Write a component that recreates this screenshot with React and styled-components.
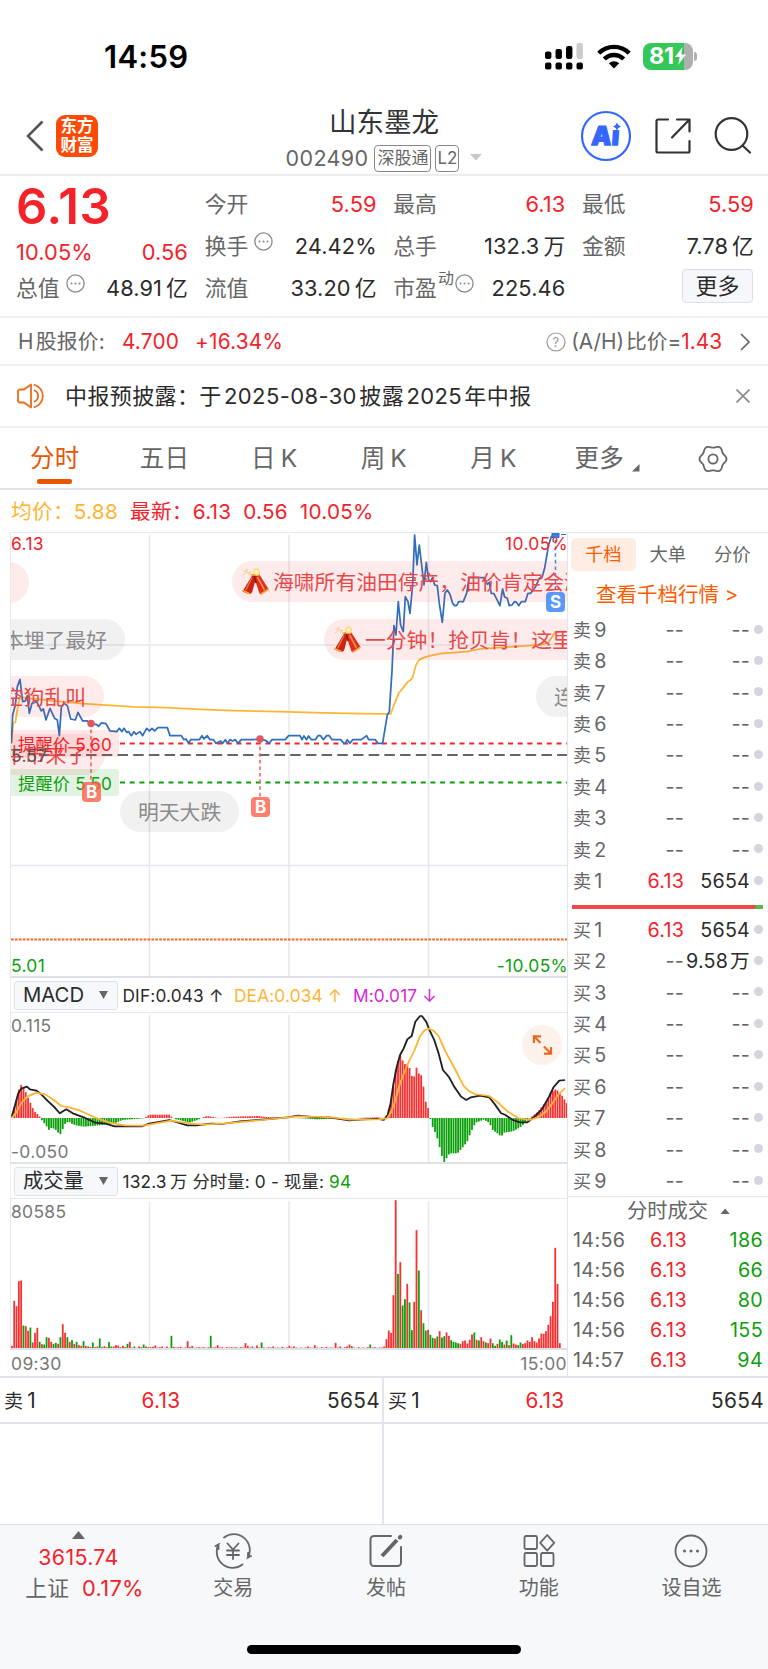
import React from "react";
// Styles
import styled, { createGlobalStyle } from "styled-components";

const RED = "#f5222a";
const GREEN = "#0d9f0d";
const GRAY = "#666";
const DARK = "#2b2b2b";
const ORANGE = "#ff5c00";
const AMBER = "#ffb534";
const LINE = "#e3e5ec";

// ---------- Data ----------

const quoteColumns = [
  [
    { label: "今开", value: "5.59", color: RED },
    { label: "换手", value: "24.42%", info: true },
    { label: "流值", value: "33.20亿" },
  ],
  [
    { label: "最高", value: "6.13", color: RED },
    { label: "总手", value: "132.3万" },
    { label: "市盈", sup: "动", value: "225.46", info: true },
  ],
  [
    { label: "最低", value: "5.59", color: RED },
    { label: "金额", value: "7.78亿" },
  ],
];

const periods = ["分时", "五日", "日K", "周K", "月K"];

const sells = [9, 8, 7, 6, 5, 4, 3, 2, 1].map((n) => ({
  side: "卖",
  n,
  price: n === 1 ? "6.13" : "--",
  volume: n === 1 ? "5654" : "--",
}));

const buys = [1, 2, 3, 4, 5, 6, 7, 8, 9].map((n) => ({
  side: "买",
  n,
  price: n === 1 ? "6.13" : "--",
  volume: n === 1 ? "5654" : n === 2 ? "9.58万" : "--",
}));

const ticks = [
  ["14:56", "6.13", 186],
  ["14:56", "6.13", 66],
  ["14:56", "6.13", 80],
  ["14:56", "6.13", 155],
  ["14:57", "6.13", 94],
];

// Thin space between a number and its Chinese unit
const withUnit = (text) => text.replace(/([万亿])/, "\u2009$1");

// Price line, in thirds of a pixel from the chart's left and top edges
const priceLine =
  "1,634 5,549 13,519 19,464 27,442 35,509 43,507 49,491 55,544 63,514 77,509 91,537 97,531 105,564 117,529 131,559 139,564 145,611 151,527 159,514 169,521 179,561 193,564 201,541 215,567 229,567 241,577 255,577 263,583 271,573 285,575 297,597 317,599 325,589 333,599 339,589 347,601 353,599 361,611 369,599 375,607 387,599 395,611 407,589 415,597 423,589 431,597 441,587 469,587 477,611 511,611 519,623 525,621 533,634 539,623 565,623 573,611 579,621 589,611 597,623 607,623 615,634 629,627 635,634 643,623 649,634 657,623 665,627 673,623 681,634 691,623 727,623 747,621 763,625 775,634 783,623 823,623 833,611 867,611 873,623 879,612 887,623 893,612 901,623 913,623 921,611 929,611 937,623 947,611 955,611 963,623 989,623 999,634 1003,634 1009,623 1017,634 1025,623 1051,623 1067,611 1073,623 1093,623 1101,634 1115,634 1129,549 1135,539 1143,419 1149,281 1155,309 1162,209 1169,279 1177,299 1183,194 1191,209 1197,244 1205,159 1211,9 1218,99 1225,39 1239,159 1246,91 1253,144 1259,149 1265,137 1271,159 1279,161 1285,214 1294,271 1302,184 1309,174 1317,187 1325,214 1331,221 1337,221 1343,209 1357,209 1367,184 1375,137 1419,137 1429,157 1435,151 1441,184 1449,185 1467,221 1475,171 1481,195 1489,199 1495,221 1503,219 1511,209 1517,211 1523,221 1531,209 1543,209 1551,184 1559,184 1567,174 1575,162 1585,139 1593,137 1601,109 1613,39 1621,14 1633,9";
const averageLine =
  "1,634 7,574 13,571 23,509 29,495 57,499 127,507 217,515 297,520 367,525 467,527 567,532 667,536 807,539 907,542 1007,544 1107,546 1139,546 1151,514 1163,484 1177,467 1191,449 1199,444 1205,437 1215,399 1225,383 1247,374 1287,365 1367,359 1407,351 1507,344 1587,339 1613,331 1633,300 1665,299";

// MACD curves, x in 2.75ths and y in thirds of a pixel
const difLine =
  "2,314 10,284 20,244 28,230 44,224 52,232 70,236 82,246 100,266 118,284 134,304 152,292 170,304 200,316 232,332 260,335 285,343 360,343 380,335 435,324 460,332 485,340 510,340 550,335 580,336 630,328 700,322 760,316 790,311 840,316 875,316 930,325 970,322 1010,321 1025,324 1036,309 1044,274 1052,214 1060,169 1070,129 1080,109 1090,82 1102,72 1112,29 1125,12 1130,12 1142,29 1150,52 1164,84 1176,124 1188,174 1205,196 1220,226 1238,254 1252,264 1265,256 1290,251 1315,256 1330,276 1348,304 1360,309 1380,324 1400,331 1420,331 1440,314 1460,292 1480,254 1492,226 1508,206 1524,204";
const deaLine =
  "2,318 14,302 28,274 44,254 70,242 95,248 118,264 138,282 160,286 190,296 230,316 270,332 315,340 365,341 410,332 440,326 490,334 530,338 590,334 690,324 790,313 850,315 890,317 930,323 1010,322 1034,319 1046,299 1056,269 1070,214 1090,159 1110,114 1125,72 1138,54 1150,50 1162,56 1176,72 1195,119 1220,169 1245,222 1260,238 1275,246 1315,252 1340,272 1365,298 1395,318 1425,324 1450,316 1470,300 1490,272 1505,248 1524,228";

// MACD histogram envelope: [x, height] pairs around the zero line
const histogram = [
  [2, 4], [8, 30], [16, 60], [22, 90], [28, 100], [34, 92], [40, 78], [46, 62], [52, 48], [58, 32],
  [64, 20], [72, 12], [78, 5], [82, -3], [90, -14], [98, -26], [104, -36], [110, -30], [118, -32],
  [126, -38], [134, -52], [140, -38], [148, -18], [158, -10], [168, -18], [178, -22], [200, -26],
  [220, -24], [240, -22], [270, -18], [290, -14], [305, -6], [330, -4], [365, -1], [372, 4],
  [380, 10], [435, 10], [442, 3], [450, -3], [470, -8], [490, -14], [515, -5], [526, 2], [540, 6],
  [560, 2], [570, -1], [585, 1], [610, 4], [680, 6], [700, 3], [750, 1], [800, -1], [840, -4],
  [910, -2], [970, 1], [1010, 2], [1026, -1], [1032, 6], [1040, 30], [1048, 60], [1056, 138],
  [1064, 170], [1072, 192], [1080, 160], [1088, 164], [1096, 150], [1104, 120], [1110, 126],
  [1114, 154], [1120, 135], [1128, 128], [1134, 95], [1140, 50], [1146, 34], [1152, 2], [1158, -24],
  [1166, -42], [1172, -60], [1178, -85], [1184, -110], [1190, -134], [1198, -120], [1206, -106],
  [1228, -106], [1242, -88], [1254, -72], [1262, -50], [1270, -30], [1278, -14], [1300, -5],
  [1315, -14], [1325, -36], [1340, -48], [1348, -56], [1356, -44], [1380, -40], [1400, -28],
  [1420, -8], [1432, 4], [1450, 20], [1470, 48], [1485, 76], [1495, 86], [1505, 82], [1515, 68],
  [1530, 42],
];

// Volume per minute: r = up, g = down
const volumes =
  "r8 r143 r127 r202 r204 g69 r67 r53 g63 r18 r47 r62 g20 r13 g12 g34 r32 r20 g14 g17 r14 g34 r73 r47 g34 r20 g25 r14 g20 r10 r8 g22 r8 g6 r5 g18 r4 r6 g30 g4 r7 r4 g19 g6 r6 r10 r9 g4 r8 r4 g14 r20 r3 g6 r2 r6 r4 g12 r6 g4 r4 r5 r9 r3 r4 r6 r2 r6 g2 g38 r5 r3 r4 r5 r2 r3 r22 g4 r8 r2 r3 r4 r3 r4 r2 r4 g38 r3 r4 r10 r3 r4 r2 r4 r3 r4 g3 r4 r2 r4 r3 r16 r8 r3 r6 r2 r9 r3 g18 r3 r2 r4 r3 r6 r2 r3 r2 r5 r2 r3 r8 r3 r6 r3 r2 r3 r2 r3 r6 r3 r2 r10 r3 r2 r4 r2 r5 r2 r3 r2 r17 r3 r6 r2 r4 r6 r12 g7 r3 r2 r4 r2 r3 r2 r4 g12 r3 r4 r2 r3 r3 r6 r28 r54 r47 r160 r445 g224 r259 g129 g148 r194 g138 g55 r140 r355 g234 r115 g76 g54 r56 g41 g32 r30 g36 r52 g33 g37 r48 r38 g25 g20 g18 g16 r14 r22 r24 r15 r26 r42 g48 r26 g24 r34 r22 g18 r16 r30 g16 g8 r14 g27 g20 r12 g24 r10 g40 r15 r12 g10 g18 r14 r16 r24 r20 r34 r22 r18 r30 r45 r44 r52 r71 r97 r140 r302 r194 r16".split(" ");

// Height of the histogram at x, linear between its neighbours
const heightAt = (x) => {
  const i = histogram.findIndex((p) => p[0] >= x);
  if (i <= 0) return histogram[0][1];
  const [x0, h0] = histogram[i - 1];
  const [x1, h1] = histogram[i];
  return h0 + ((h1 - h0) * (x - x0)) / (x1 - x0);
};

const gearPath =
  Array.from({ length: 73 }, (_, i) => {
    const a = (i * Math.PI) / 36;
    const r = 12.4 + 1.1 * Math.cos(6 * a);
    return `${i ? "L" : "M"}${(15 + r * Math.cos(a)).toFixed(2)} ${(15 + r * Math.sin(a)).toFixed(2)}`;
  }).join("") + "Z";

// ---------- Icons ----------

const Dots = ({ size = 19 }) => (
  <svg width={size} height={size} viewBox="0 0 19 19" fill="none" stroke="#888">
    <circle cx="9.5" cy="9.5" r="8.6" strokeWidth="1.3" />
    <path d="M5.5 9.5h.01M9.5 9.5h.01M13.5 9.5h.01" strokeWidth="2" strokeLinecap="round" />
  </svg>
);

const Firecracker = () => (
  <svg width="28" height="28" viewBox="0 0 28 28">
    <path d="M12 6h4l-4.500 17c-.5 2-2 3.500-4 3l-6-2.500z" fill="#c92413" />
    <path d="M12 6h6l9.500 15-6.500 5c-1 .5-2 .2-2.600-.8z" fill="#dd2f18" />
    <path d="M16.500 9l7 13" stroke="#ff8a4d" strokeWidth="1.600" />
    <path d="M11 9.500L4.800 22" stroke="#f4703f" strokeWidth="1.400" />
    <path d="M1.800 22.500l6.400 3M20 26l7-4.500M10 7h7.500" stroke="#f3a93d" strokeWidth="1.500" strokeLinecap="round" />
    <path d="M13.500 8l1.500 7" stroke="#8f1208" strokeWidth="1.500" />
    <circle cx="15.500" cy="3.800" r="3.600" fill="#ffdf87" />
    <circle cx="15.500" cy="4" r="1.800" fill="#fff6cf" />
    <path d="M2 2l2 2 2-3v4l4-1-3 3M2 7l3-2" stroke="#f4cf86" strokeWidth="1" fill="none" />
  </svg>
);

const Signal = () => (
  <svg width="39" height="27" viewBox="0 0 39 27">
    {[0, 10.5, 21, 31.5].map((x, i) => (
      <g key={x}>
        <rect x={x} y={[8.5, 6, 3, 0][i]} width="6.400" height={[7.5, 10, 13, 16][i]} rx="2" fill={i === 3 ? "#cbcbcb" : "#000"} />
        <rect x={x} y="19.500" width="6.400" height="7" rx="2" />
      </g>
    ))}
  </svg>
);

const Wifi = () => (
  <svg width="34" height="25" viewBox="0 0 34 25" fill="none" stroke="#000" strokeWidth="4.400">
    <path d="M1.800 9.200a21.500 21.500 0 0 1 30.400 0" />
    <path d="M7.300 15a13.700 13.700 0 0 1 19.400 0" />
    <path d="M17 24.500l-5.200-5.200a7.400 7.400 0 0 1 10.400 0z" fill="#000" stroke="none" />
  </svg>
);

// ---------- Charts ----------

function PriceChart() {
  return (
    <ChartBox $height={446}>
      <svg width="557" height="446" viewBox="0 0 557 446" fill="none">
        <path d="M138.500 3v441M278 3v441M417.500 3v441M0 113h557M0 333.500h557" stroke="#e6e8f0" strokeWidth="1.500" />
        <path d="M109 211.500h448" stroke={RED} strokeWidth="1.900" strokeDasharray="5 4.700" />
        <path d="M28 223h529" stroke="#666" strokeWidth="1.800" strokeDasharray="10.500 5.200" />
        <path d="M109 250.500h448" stroke={GREEN} strokeWidth="1.900" strokeDasharray="5 4.700" />
        <path d="M0 407.500h557" stroke="#f06a20" strokeWidth="1.900" strokeDasharray="2.700 1.200" />
        <g transform="scale(.3333)" strokeWidth="5.200" strokeLinejoin="round">
          <polyline points={averageLine} stroke={AMBER} />
          <polyline points={priceLine} stroke="#2f6fbe" />
        </g>
        <path d="M80 191v58M249 208v58" stroke="#f2675e" strokeWidth="1.600" strokeDasharray="3.600 3" />
        <circle cx="80" cy="191.500" r="3.700" fill="#e0565a" />
        <circle cx="249" cy="207" r="3.700" fill="#e0565a" />
        <path d="M544.500 8v52" stroke="#3f86ee" strokeWidth="1.500" strokeDasharray="3.600 3" />
        <path d="M541 1h7v4.500h-7zM550 2.500h5" fill="#2f84f0" stroke="#2f6fbe" strokeWidth="1" />
      </svg>

      <Comment $top={29} $right={538} />
      <Comment $top={28} $left={221} $icon>
        <Firecracker />
        海啸所有油田停产，油价肯定会涨
      </Comment>
      <Comment $top={86} $right={442} $gray>
        基本埋了最好
      </Comment>
      <Comment $top={86} $left={313} $icon>
        <Firecracker />
        一分钟！抢贝肯！这里
      </Comment>
      <Comment $top={143} $right={463}>空狗乱叫</Comment>
      <Comment $top={143} $left={525} $gray>
        连板
      </Comment>
      <Comment $top={201} $right={462}>牛市来了</Comment>
      <Comment $top={258} $left={109} $gray>
        明天大跌
      </Comment>

      <Remind $top={197}>提醒价 5.60</Remind>
      <Remind $top={236} $green>
        提醒价 5.50
      </Remind>
      <Badge $left={71} $top={249}>B</Badge>
      <Badge $left={240} $top={264}>B</Badge>
      <Badge $left={535} $top={59} $blue>
        S
      </Badge>

      <Scale $top={1} $color={RED}>6.13</Scale>
      <Scale $top={1} $color={RED} $end>
        10.05%
      </Scale>
      <Scale $top={213} $color="#555">5.57</Scale>
      <Scale $top={423} $color={GREEN}>5.01</Scale>
      <Scale $top={423} $color={GREEN} $end>
        -10.05%
      </Scale>
    </ChartBox>
  );
}

function MacdChart() {
  return (
    <ChartBox $height={152}>
      <svg width="557" height="152" viewBox="0 0 557 152" fill="none">
        <path d="M138.500 3v148M278 3v148M417.500 3v148" stroke="#e6e8f0" strokeWidth="1.500" />
        {Array.from({ length: 241 }, (_, i) => {
          const h = heightAt(2 + i * 6.36) / 3;
          return (
            <rect
              key={i}
              x={i * 2.312}
              y={h > 0 ? 106 - h : 106}
              width="1.800"
              height={Math.abs(h)}
              fill={h > 0 ? "#f93030" : "#0b9f0b"}
            />
          );
        })}
        <g transform="scale(.3636 .3333)" strokeLinejoin="round" strokeWidth="5.200">
          <polyline points={difLine} stroke="#222" />
          <polyline points={deaLine} stroke={AMBER} />
        </g>
      </svg>
      <Scale $top={3}>0.115</Scale>
      <Scale $top={129}>-0.050</Scale>
      <Expand>
        <svg width="21" height="22" viewBox="0 0 22 22" fill="none" stroke="#f0641e" strokeWidth="2.200">
          <path d="M9 9L2.200 2.200M2 9V2h7.500M12.500 12.500l7.300 7.300M20 13v7h-7.500" />
        </svg>
      </Expand>
    </ChartBox>
  );
}

function VolumeChart() {
  return (
    <ChartBox $height={152}>
      <svg width="557" height="152" viewBox="0 0 557 152" fill="none">
        <path d="M138.500 3v148M278 3v148M417.500 3v148" stroke="#e6e8f0" strokeWidth="1.500" />
        {volumes.map((v, i) => {
          const h = Number(v.slice(1)) / 3;
          return (
            <rect
              key={i}
              x={i * 2.312}
              y={150.5 - h}
              width="1.800"
              height={h}
              fill={v[0] === "r" ? "#f93030" : "#0b9f0b"}
            />
          );
        })}
      </svg>
      <Scale $top={3}>80585</Scale>
    </ChartBox>
  );
}

function OrderRow({ side, n, price, volume }) {
  return (
    <Level>
      <span className="name">
        <i>{side}</i>
        {n}
      </span>
      <span className={price === "--" ? "price" : "price live"}>{price}</span>
      <span className={volume === "--" ? "volume" : "volume live"}>
        {volume.replace("万", "\u200A万")}
      </span>
      <span className="dot" />
    </Level>
  );
}

// ---------- Page ----------

function App() {
  return (
    <Page>
      <GlobalStyle />

      <StatusBar>
        <span className="clock">14:59</span>
        <div className="icons">
          <Signal />
          <Wifi />
          <Battery>
            <div className="level">
              81
              <svg width="11" height="18" viewBox="0 0 11 18">
                <path d="M7.500 0L0 10h4.600L3.200 18 11 7.500H6.300z" fill="#fff" />
              </svg>
            </div>
          </Battery>
        </div>
      </StatusBar>

      <Header>
        <div className="side">
          <svg width="20" height="32" viewBox="0 0 20 32" fill="none" stroke="#555" strokeWidth="2.600">
            <path d="M17.500 1.500L3 16l14.500 14.500" />
          </svg>
          <Logo>
            东方
            <br />
            财富
          </Logo>
        </div>
        <div className="title">
          <h1>山东墨龙</h1>
          <p>
            002490
            <Tag>深股通</Tag>
            <Tag>L2</Tag>
            <Triangle $down $w={13} $h={7} $color="#c8c8c8" />
          </p>
        </div>
        <div className="side actions">
          <svg width="52" height="52" viewBox="0 0 52 52">
            <circle cx="26" cy="26" r="24" fill="none" stroke="#3567ff" strokeWidth="2.200" />
            <text x="10.500" y="35.500" transform="translate(3 0) skewX(-4)" fontSize="26" fontWeight="900" fill="#3567ff" stroke="#3567ff" strokeWidth="1.400" strokeLinejoin="round" textLength="28" lengthAdjust="spacingAndGlyphs">
              Aı
            </text>
            <path d="M37 12.500q.8 3.200 4 4-3.200.8-4 4-.8-3.200-4-4 3.200-.8 4-4z" fill="#3567ff" />
          </svg>
          <svg width="36" height="36" viewBox="0 0 36 36" fill="none" stroke="#333" strokeWidth="2.200" strokeLinecap="round" strokeLinejoin="round">
            <path d="M13 1.500H3A1.500 1.500 0 0 0 1.500 3v30A1.500 1.500 0 0 0 3 34.500h30a1.500 1.500 0 0 0 1.500-1.500V23" />
            <path d="M22 1.500h12.500v12M34 2L17 19.500" />
          </svg>
          <svg width="38" height="38" viewBox="0 0 38 38" fill="none" stroke="#333" strokeWidth="2.200" strokeLinecap="round">
            <circle cx="17.500" cy="17" r="15.800" />
            <path d="M28.500 28.500l7.500 7" />
          </svg>
        </div>
      </Header>

      <Quote>
        <div className="column first">
          <strong>6.13</strong>
          <QuoteItem $color={RED}>
            <span className="value">10.05%</span>
            <span className="value">0.56</span>
          </QuoteItem>
          <QuoteItem>
            <label>
              总值
              <Dots />
            </label>
            <span className="value">{withUnit("48.91亿")}</span>
          </QuoteItem>
        </div>
        {quoteColumns.map((items, i) => (
          <div className="column" key={i}>
            {items.map((item) => (
              <QuoteItem key={item.label} $color={item.color}>
                <label>
                  {item.label}
                  {item.sup && <sup>{item.sup}</sup>}
                  {item.info && <Dots />}
                </label>
                <span className="value">{withUnit(item.value)}</span>
              </QuoteItem>
            ))}
            {i === 2 && <MoreButton>更多</MoreButton>}
          </div>
        ))}
      </Quote>

      <HShare>
        <span>H{"\u200A"}股报价:</span>
        <b>4.700</b>
        <b className="change">+16.34%</b>
        <svg className="push" width="20" height="20" viewBox="0 0 20 20">
          <circle cx="10" cy="10" r="9" fill="none" stroke="#999" strokeWidth="1.200" />
          <text x="10" y="14.500" fontSize="13" textAnchor="middle" fill="#999">?</text>
        </svg>
        <span className="ratio">(A/H){"\u200A"}比价=</span>
        <b>1.43</b>
        <svg className="arrow" width="10" height="18" viewBox="0 0 10 18" fill="none" stroke="#666" strokeWidth="1.700">
          <path d="M1 1l8 8-8 8" />
        </svg>
      </HShare>

      <Notice>
        <svg width="31" height="26" viewBox="0 0 31 26" fill="none" stroke="#ee6a1c" strokeWidth="1.800" strokeLinejoin="round">
          <path d="M14 1.500L7 6.500H3A2 2 0 0 0 1 8.500v9a2 2 0 0 0 2 2h4l7 5z" />
          <path d="M17.500 7.500a6 6 0 0 1 0 11M17.500 1.800a11.700 11.700 0 0 1 0 22.400" strokeLinecap="round" />
        </svg>
        <span>{"中报预披露：于\u200A2025-08-30\u200A披露\u200A2025\u200A年中报"}</span>
        <svg width="14" height="14" viewBox="0 0 14 14" stroke="#888" strokeWidth="1.600">
          <path d="M.5.5l13 13M13.500.5l-13 13" />
        </svg>
      </Notice>

      <Periods>
        {periods.map((name, i) => (
          <Period key={name} $active={i === 0}>
            {name.replace("K", "\u2009K")}
          </Period>
        ))}
        <Period>
          更多
          <svg width="8" height="8" viewBox="0 0 8 8">
            <path d="M7.500 0v7.500H0z" fill="#666" />
          </svg>
        </Period>
        <Period>
          <svg className="gear" width="30" height="30" viewBox="0 0 30 30" fill="none" stroke="#666" strokeWidth="1.800">
            <path d={gearPath} />
            <circle cx="15" cy="15" r="4.600" />
          </svg>
        </Period>
      </Periods>

      <Legend>
        <span className="avg">均价：5.88</span>
        <span>最新：6.13</span>
        <span>0.56</span>
        <span>10.05%</span>
      </Legend>

      <Main>
        <Charts>
          <PriceChart />
          <Toolbar>
            <Picker>
              MACD
              <Triangle $down $w={9} $h={8} $color="#666" />
            </Picker>
            <span>DIF:0.043 ↑</span>
            <span className="dea">DEA:0.034 ↑</span>
            <span className="m">M:0.017 ↓</span>
          </Toolbar>
          <MacdChart />
          <Toolbar>
            <Picker>
              成交量
              <Triangle $down $w={9} $h={8} $color="#666" />
            </Picker>
            <span>
              132.3{"\u2009"}万 分时量: 0 - 现量: <em>94</em>
            </span>
          </Toolbar>
          <VolumeChart />
          <TimeAxis>
            <span>09:30</span>
            <span>15:00</span>
          </TimeAxis>
        </Charts>

        <Book>
          <BookTabs>
            <span className="active">千档</span>
            <span>大单</span>
            <span>分价</span>
          </BookTabs>
          <DepthLink>查看千档行情 &gt;</DepthLink>
          {sells.map((row) => (
            <OrderRow key={row.n} {...row} />
          ))}
          <RatioBar />
          {buys.map((row) => (
            <OrderRow key={row.n} {...row} />
          ))}
          <TickHeader>
            分时成交
            <Triangle $w={10} $h={6} $color="#666" />
          </TickHeader>
          {ticks.map(([time, price, volume], i) => (
            <Tick key={i}>
              <span>{time}</span>
              <span className="price">{price}</span>
              <span className="volume">{volume}</span>
            </Tick>
          ))}
        </Book>
      </Main>

      <BestPrices>
        {["卖", "买"].map((side) => (
          <div className="half" key={side}>
            <div className="best">
              <span>
                <i>{side}</i>1
              </span>
              <b>6.13</b>
              <span className="volume">5654</span>
            </div>
          </div>
        ))}
      </BestPrices>

      <BottomNav>
        <IndexItem>
          <Triangle $w={13} $h={8} $color="#666" />
          <b>3615.74</b>
          <p>
            上证 <b>0.17%</b>
          </p>
        </IndexItem>
        <NavItem>
          <svg width="38" height="36" viewBox="0 0 38 36" fill="none" stroke="#666" strokeWidth="1.800" strokeLinecap="round">
            <path d="M10 4.500a16 16 0 0 1 24 20l3-1.500M34 24.500V20" />
            <path d="M28.500 31.500A16 16 0 0 1 4.500 11.500L1.500 13M4.500 11.500V16" />
            <path d="M13.500 10.500l5.500 6 5.500-6M19 16.500V26M13 17.500h12M13 22h12" />
          </svg>
          交易
        </NavItem>
        <NavItem>
          <svg width="36" height="36" viewBox="0 0 36 36" fill="none" stroke="#666" strokeWidth="2" strokeLinecap="round">
            <path d="M23 3H6a3.500 3.500 0 0 0-3.500 3.500v23A3.500 3.500 0 0 0 6 33h23.500a3.500 3.500 0 0 0 3.500-3.500V14" />
            <path d="M14 23l15-16" strokeWidth="4" strokeLinecap="butt" />
            <path d="M31.800 4.500l.6-.6" strokeWidth="4" />
          </svg>
          发帖
        </NavItem>
        <NavItem>
          <svg width="34" height="36" viewBox="0 0 34 36" fill="none" stroke="#666" strokeWidth="1.800" strokeLinejoin="round">
            <rect x="2.500" y="3" width="12.500" height="13" rx="1.500" />
            <rect x="2.500" y="20" width="12.500" height="13" rx="1.500" />
            <rect x="19" y="20" width="12.500" height="13" rx="1.500" />
            <path d="M25.200 2l7 7.800-7 7.800-7-7.800z" />
          </svg>
          功能
        </NavItem>
        <NavItem>
          <svg width="34" height="36" viewBox="0 0 34 36" fill="none" stroke="#666">
            <circle cx="17" cy="18" r="15.500" strokeWidth="1.800" />
            <path d="M10.500 18h.01M17 18h.01M23.500 18h.01" strokeWidth="3" strokeLinecap="round" />
          </svg>
          设自选
        </NavItem>
        <HomeBar />
      </BottomNav>
    </Page>
  );
}

// ---------- Styles ----------

const GlobalStyle = createGlobalStyle`
  * {
    box-sizing: border-box;
    margin: 0;
    padding: 0;
  }
  body {
    background: #fff;
    font-family: Inter, "Noto Sans CJK SC", sans-serif;
    line-height: 1.2;
  }
  svg {
    display: block;
    flex: none;
  }
`;

const Page = styled.div`
  width: 768px;
  height: 1669px;
  display: flex;
  flex-direction: column;
  overflow: hidden;
  color: ${DARK};
  letter-spacing: 0.35px;
  white-space: nowrap;
  b,
  i,
  em {
    font-weight: 400;
    font-style: normal;
  }
  b {
    color: ${RED};
  }
`;

const Triangle = styled.span`
  flex: none;
  width: ${(p) => p.$w}px;
  height: ${(p) => p.$h}px;
  background: ${(p) => p.$color};
  clip-path: ${(p) =>
    p.$down ? "polygon(0 0, 100% 0, 50% 100%)" : "polygon(50% 0, 100% 100%, 0 100%)"};
`;

const StatusBar = styled.div`
  flex: none;
  height: 100px;
  padding: 14px 71px 0 104px;
  display: flex;
  justify-content: space-between;
  align-items: center;
  .clock {
    font-size: 31px;
    font-weight: 600;
    letter-spacing: 0.3px;
    color: #000;
  }
  .icons {
    display: flex;
    align-items: center;
    gap: 13px;
    margin-top: -2px;
  }
`;

const Battery = styled.div`
  position: relative;
  width: 50px;
  height: 27px;
  border-radius: 8px;
  background: linear-gradient(90deg, #34c759 82%, #b0b0b0 82%);
  margin: 0 4px 0 -1px;
  .level {
    height: 27px;
    padding-left: 6px;
    display: flex;
    align-items: center;
    gap: 1px;
    color: #fff;
    font-size: 23.5px;
    font-weight: 700;
    letter-spacing: -0.3px;
  }
  &::after {
    content: "";
    position: absolute;
    left: 51px;
    top: 9px;
    width: 3px;
    height: 9px;
    border-radius: 0 4px 4px 0;
    background: #b0b0b0;
  }
`;

const Header = styled.header`
  flex: none;
  height: 76px;
  padding: 0 16px;
  display: grid;
  grid-template-columns: 1fr auto 1fr;
  align-items: center;
  border-bottom: 2px solid #ededf0;
  .side {
    padding: 0 0 2px 9px;
    display: flex;
    align-items: center;
    gap: 11px;
  }
  .actions {
    justify-content: flex-end;
    gap: 23px;
  }
  .title {
    padding-top: 2px;
    text-align: center;
    color: ${GRAY};
  }
  h1 {
    font-size: 27.5px;
    line-height: 40px;
    font-weight: 400;
    letter-spacing: 0;
    color: #333;
  }
  p {
    display: flex;
    align-items: center;
    justify-content: center;
    font-size: 21.5px;
    line-height: 32px;
  }
  p > :last-child {
    margin: 0 0 2px 10px;
  }
`;

const Logo = styled.div`
  width: 42px;
  height: 42px;
  border-radius: 9px;
  padding-top: 2px;
  background: #ff4a05;
  color: #fff;
  font-size: 16.5px;
  font-weight: 700;
  letter-spacing: 0;
  line-height: 18.5px;
  text-align: center;
`;

const Tag = styled.span`
  height: 27px;
  padding: 0 2px;
  margin-left: 6px;
  border: 1.5px solid #888;
  border-radius: 4px;
  font-size: 17px;
  letter-spacing: 0;
  line-height: 24px;
  & + & {
    margin-left: 4px;
    padding: 0 1px;
  }
`;

const Quote = styled.section`
  flex: none;
  height: 142px;
  padding: 7px 15px 0 16px;
  display: grid;
  grid-template-columns: repeat(4, 171px);
  justify-content: space-between;
  border-bottom: 2px solid #f0f0f3;
  .column {
    display: flex;
    flex-direction: column;
  }
  .first {
    strong {
      height: 47px;
      line-height: 47px;
      font-size: 49px;
      font-weight: 600;
      letter-spacing: 0.6px;
      color: ${RED};
    }
    > :nth-child(2) {
      height: 37px;
      padding-top: 7px;
    }
  }
`;

const QuoteItem = styled.div`
  height: 42px;
  display: flex;
  align-items: center;
  justify-content: space-between;
  font-size: 21.8px;
  label {
    display: flex;
    align-items: center;
    color: ${GRAY};
    letter-spacing: 0;
  }
  label svg {
    margin: -10px 0 0 6px;
  }
  sup {
    font-size: 16px;
    margin: -18px 0 0 1px;
    & + svg {
      margin-left: 1px;
    }
  }
  .value {
    color: ${(p) => p.$color || DARK};
    letter-spacing: 0.1px;
    margin-right: -1px;
  }
`;

const MoreButton = styled.button`
  align-self: flex-end;
  width: 71px;
  height: 34px;
  margin-top: 2px;
  border: 1px solid #dcdfe6;
  border-radius: 4px;
  background: #f6f7fa;
  color: ${DARK};
  font-family: inherit;
  font-size: 22px;
  line-height: 31px;
`;

const HShare = styled.section`
  flex: none;
  height: 48px;
  padding: 2px 18px 0;
  display: flex;
  align-items: center;
  font-size: 20.8px;
  letter-spacing: 0.2px;
  color: ${GRAY};
  border-bottom: 2px solid #f0f0f3;
  span + b {
    margin-left: 17px;
  }
  .change {
    margin-left: 16px;
  }
  .push {
    margin-left: auto;
  }
  .ratio {
    margin-left: 5px;
    letter-spacing: 0;
    & + b {
      margin-left: 0;
      letter-spacing: 0;
    }
  }
  .arrow {
    margin-left: 18px;
  }
`;

const Notice = styled.section`
  flex: none;
  height: 62px;
  padding: 0 18px 0 17px;
  display: flex;
  align-items: center;
  border-bottom: 2px solid #f0f0f3;
  font-size: 22px;
  span {
    flex: 1;
    margin-left: 17px;
    letter-spacing: 0.38px;
  }
`;

const Periods = styled.nav`
  flex: none;
  height: 62px;
  display: grid;
  grid-template-columns: repeat(7, 109.7px);
  border-bottom: 2px solid ${LINE};
`;

const Period = styled.div`
  position: relative;
  padding-top: 2px;
  display: flex;
  align-items: center;
  justify-content: center;
  font-size: 24.5px;
  color: ${(p) => (p.$active ? "#ea5504" : GRAY)};
  &::after {
    content: "";
    display: ${(p) => (p.$active ? "block" : "none")};
    position: absolute;
    bottom: 4px;
    width: 35px;
    height: 5px;
    border-radius: 2px;
    background: #ea5504;
  }
  svg {
    margin: 18px -8px 0 8px;
  }
  .gear {
    margin: 0;
  }
`;

const Legend = styled.div`
  flex: none;
  height: 42px;
  padding: 2px 11px 0;
  display: flex;
  align-items: center;
  gap: 12px;
  font-size: 20.7px;
  letter-spacing: 0.25px;
  color: ${RED};
  .avg {
    color: ${AMBER};
  }
`;

const Main = styled.main`
  flex: none;
  height: 844px;
  display: grid;
  grid-template-columns: 567px 1fr;
`;

const Charts = styled.div`
  padding-left: 10px;
  display: flex;
  flex-direction: column;
`;

const ChartBox = styled.div`
  position: relative;
  flex: none;
  height: ${(p) => p.$height}px;
  overflow: hidden;
  border: 1px solid #e6e8f0;
  border-width: 1px 0 2px 1px;
  border-bottom-color: #dfe1e8;
  > svg {
    margin-top: -1px;
  }
`;

// Scrolling viewer comments over the price chart
const Comment = styled.div`
  position: absolute;
  top: ${(p) => p.$top}px;
  ${(p) => (p.$left !== undefined ? `left: ${p.$left}px;` : `right: ${p.$right}px;`)}
  height: 41px;
  min-width: 60px;
  padding: 3px 18px 0 ${(p) => (p.$icon ? 9 : 18)}px;
  display: flex;
  align-items: center;
  gap: 4px;
  border-radius: 21px;
  background: ${(p) => (p.$gray ? "rgba(120, 120, 120, 0.1)" : "rgba(235, 70, 70, 0.11)")};
  color: ${(p) => (p.$gray ? "#8b8b8b" : "#e8484a")};
  font-size: 20.8px;
  letter-spacing: 0;
  svg {
    margin-top: -3px;
  }
`;

const Remind = styled.div`
  position: absolute;
  left: 0;
  top: ${(p) => p.$top}px;
  width: 108px;
  height: 27px;
  padding-left: 7px;
  border-radius: 0 3px 3px 0;
  background: ${(p) => (p.$green ? "rgba(20, 160, 20, 0.12)" : "rgba(245, 34, 42, 0.1)")};
  color: ${(p) => (p.$green ? GREEN : RED)};
  font-size: 17.2px;
  letter-spacing: 0.2px;
  line-height: 29px;
`;

const Badge = styled.div`
  position: absolute;
  left: ${(p) => p.$left}px;
  top: ${(p) => p.$top}px;
  width: 19px;
  height: 20px;
  border-radius: 4px;
  background: ${(p) => (p.$blue ? "rgba(61, 136, 250, 0.85)" : "rgba(255, 95, 75, 0.8)")};
  color: #fff;
  font-size: 17px;
  font-weight: 700;
  letter-spacing: 0;
  line-height: 20px;
  text-align: center;
`;

const Scale = styled.span`
  position: absolute;
  top: ${(p) => p.$top}px;
  ${(p) => (p.$end ? "right: -1px" : "left: 0")};
  font-size: 17.4px;
  line-height: 20px;
  color: ${(p) => p.$color || "#777"};
`;

const Expand = styled.div`
  position: absolute;
  right: 5px;
  top: 12px;
  width: 40px;
  height: 40px;
  border-radius: 50%;
  display: flex;
  align-items: center;
  justify-content: center;
  background: rgba(252, 236, 228, 0.75);
`;

const Toolbar = styled.div`
  flex: none;
  height: 34px;
  padding-left: 3px;
  display: flex;
  align-items: center;
  gap: 10.5px;
  font-size: 17.3px;
  letter-spacing: 0.15px;
  border-left: 1px solid #f0f0f3;
  > span {
    padding-top: 2px;
  }
  .dea {
    color: ${AMBER};
  }
  .m {
    color: #d81fe0;
  }
  em {
    color: ${GREEN};
  }
`;

const Picker = styled.div`
  width: 104px;
  height: 29px;
  padding: 0 9px 0 8px;
  margin-right: -6px;
  display: flex;
  align-items: center;
  justify-content: space-between;
  border: 1px solid #e0e2ea;
  border-radius: 3px;
  background: #f7f8fb;
  font-size: 20.3px;
  letter-spacing: 0;
  line-height: 28px;
`;

const TimeAxis = styled.div`
  flex: none;
  height: 26px;
  padding-left: 1px;
  display: flex;
  justify-content: space-between;
  font-size: 17.5px;
  line-height: 28px;
  color: #777;
`;

const Book = styled.aside`
  padding-top: 5px;
  border: 1px solid ${LINE};
  border-width: 1px 0 0 1px;
  display: flex;
  flex-direction: column;
`;

const BookTabs = styled.div`
  flex: none;
  height: 33px;
  display: grid;
  grid-template-columns: repeat(3, 64.5px);
  padding-left: 3px;
  font-size: 18.3px;
  letter-spacing: 0;
  line-height: 32px;
  text-align: center;
  color: ${GRAY};
  .active {
    border-radius: 5px;
    background: #ffede4;
    color: ${ORANGE};
  }
`;

const DepthLink = styled.div`
  flex: none;
  height: 43px;
  padding-left: 28px;
  font-size: 20.5px;
  letter-spacing: 0;
  line-height: 48px;
  color: ${ORANGE};
`;

const Level = styled.div`
  flex: none;
  height: 31.4px;
  display: grid;
  grid-template-columns: 40px 71px 66px 14px;
  padding: 2px 0 0 5px;
  align-items: center;
  font-size: 19.7px;
  letter-spacing: 0.2px;
  color: ${GRAY};
  text-align: right;
  i {
    font-size: 18px;
    margin-right: 3px;
  }
  .name {
    text-align: left;
  }
  .price.live {
    color: ${RED};
  }
  .volume.live {
    color: ${DARK};
  }
  .dot {
    justify-self: end;
    margin: -3px 1px 0 0;
    width: 9px;
    height: 9px;
    border-radius: 50%;
    background: #d3d6de;
  }
`;

const RatioBar = styled.div`
  flex: none;
  height: 4px;
  margin: 8px 5px 5.4px 4px;
  background: linear-gradient(120deg, #ee4a4a 95.5%, #58b947 95.5%);
`;

const TickHeader = styled.div`
  flex: none;
  height: 28px;
  padding: 1px 0 0 59px;
  display: flex;
  align-items: center;
  gap: 12px;
  border-top: 1px solid ${LINE};
  font-size: 20.3px;
  letter-spacing: 0;
  line-height: 26px;
  color: ${GRAY};
`;

const Tick = styled.div`
  flex: none;
  height: 30.2px;
  padding: 2px 5px 0;
  display: grid;
  grid-template-columns: 1fr 60px 76px;
  align-items: center;
  font-size: 19.7px;
  color: ${GRAY};
  text-align: right;
  > :first-child {
    text-align: left;
  }
  .price {
    color: ${RED};
  }
  .volume {
    color: ${GREEN};
  }
`;

const BestPrices = styled.section`
  flex: none;
  height: 148px;
  display: grid;
  grid-template-columns: 384px 384px;
  border-top: 2px solid ${LINE};
  .half + .half {
    border-left: 2px solid ${LINE};
    margin-left: -2px;
  }
  .best {
    height: 46px;
    padding: 3px 4px 0;
    display: grid;
    grid-template-columns: 1fr auto 1fr;
    align-items: center;
    border-bottom: 2px solid ${LINE};
    font-size: 20.8px;
  }
  i {
    font-size: 19px;
    margin-right: 4px;
  }
  b {
    padding-right: 62px;
  }
  .volume {
    text-align: right;
  }
`;

const BottomNav = styled.footer`
  position: relative;
  flex: 1;
  display: grid;
  grid-template-columns: 157px repeat(4, 152.7px);
  align-items: start;
  border-top: 1px solid #dcdfe6;
  background: #f7f8fa;
`;

const IndexItem = styled.div`
  padding-top: 6px;
  display: flex;
  flex-direction: column;
  align-items: center;
  font-size: 21.3px;
  line-height: 31px;
  color: ${GRAY};
  > b {
    margin-top: 3px;
  }
  p {
    font-size: 21.8px;
    margin-left: 12px;
    b {
      margin-left: 6px;
    }
  }
`;

const NavItem = styled.div`
  padding-top: 8px;
  display: flex;
  flex-direction: column;
  align-items: center;
  gap: 4px;
  font-size: 20px;
  letter-spacing: 0;
  line-height: 30px;
  color: ${GRAY};
`;

const HomeBar = styled.div`
  position: absolute;
  left: 247px;
  bottom: 15px;
  width: 274px;
  height: 9px;
  border-radius: 5px;
  background: #000;
`;

export default App;
